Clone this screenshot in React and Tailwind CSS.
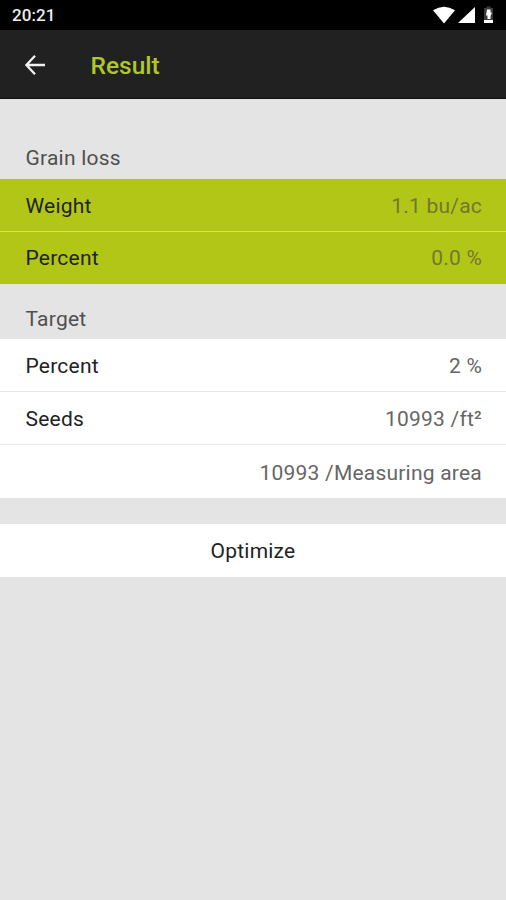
const LOSS_ROWS = [
  { label: 'Weight', value: '1.1 bu/ac' },
  { label: 'Percent', value: '0.0 %' },
]

const TARGET_ROWS = [
  { label: 'Percent', value: '2 %' },
  { label: 'Seeds', value: '10993 /ft²' },
  { label: '', value: '10993 /Measuring area' },
]

function StatusBar() {
  return (
    <div className="h-[30px] bg-black flex items-center justify-between pl-3 pr-[11px] text-white">
      <span className="text-[17px] leading-[30px] tracking-[0.1px] font-medium text-[#ececec]">20:21</span>
      <svg width="63" height="18" viewBox="0 0 63 18" fill="currentColor">
        <path d="M1 4.3Q12 -2.7 23 4.3L12 17.5Z" />
        <path d="M43 1V17H26Z" />
        <path d="M52 2h2.5V0.5h4V2H61v12h-9z" fill="#3c3c3c" />
        <path d="M52 14h9v3h-9z" />
        <path d="M55 3.5h3.5v3H60L58.5 10v3h-3V9.5H54z" />
      </svg>
    </div>
  )
}

function Header({ title }) {
  return (
    <header className="h-[69px] bg-[#212121] flex items-center border-b border-[#111]">
      <button className="ml-6 w-[22px] pt-px text-[#f2f2f2]" aria-label="Back">
        <svg width="22" height="22" viewBox="0 0 22 22" fill="none" stroke="currentColor" strokeWidth="2.3">
          <path d="M21 11H3M11 1.7L2.4 11L11 20.3" />
        </svg>
      </button>
      <h1 className="ml-[44.5px] pt-1 text-[24.5px] leading-[30px] tracking-[0px] font-medium text-[#b0c72b]">{title}</h1>
    </header>
  )
}

function SectionTitle({ children }) {
  return <h2 className="pl-[25.5px] leading-[26px] text-[#505050]">{children}</h2>
}

function Row({ label, value, className }) {
  return (
    <div className={`pl-[25.5px] pr-6 flex items-center justify-between ${className}`}>
      <span className="text-[#222]">{label}</span>
      <span className="text-(--value)">{value}</span>
    </div>
  )
}

export default function App() {
  return (
    <div className="min-h-screen w-full bg-[#e4e4e4] text-[21px] tracking-[0.22px] font-['Roboto',sans-serif]">
      <StatusBar />
      <Header title="Result" />

      <section className="pt-[46px]">
        <SectionTitle>Grain loss</SectionTitle>
        <div className="mt-2 bg-[#b2c618] divide-y divide-[#d3dc8d] [--value:#74772f]">
          {LOSS_ROWS.map((r) => (
            <Row key={r.label} label={r.label} value={r.value} className="h-[53px] pt-[3px] last:h-[52px] last:pt-[2px]" />
          ))}
        </div>
      </section>

      <section className="pt-[22px]">
        <SectionTitle>Target</SectionTitle>
        <div className="mt-[7px] bg-white divide-y divide-[#e9e9e9] [--value:#666]">
          {TARGET_ROWS.map((r) => (
            <Row key={r.value} label={r.label} value={r.value} className="h-[53px] pt-1" />
          ))}
        </div>
      </section>

      <button className="mt-[26px] h-[53px] w-full bg-white pt-[3px] text-center text-[#222]">Optimize</button>
    </div>
  )
}
